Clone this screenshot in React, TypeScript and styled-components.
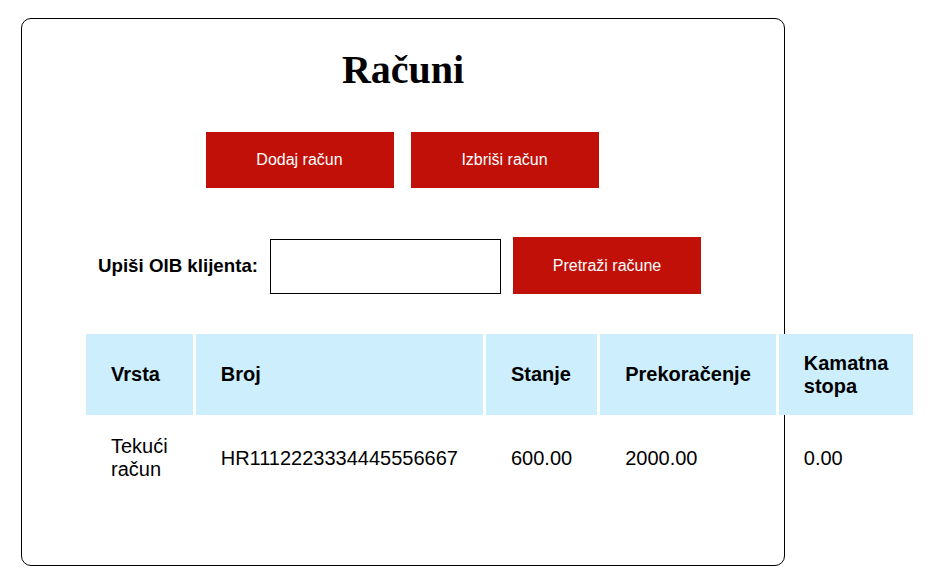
import styled, { createGlobalStyle } from "styled-components";

type RACUN = {
    vrsta: string;
    broj: string;
    stanje: string;
    prekoracenje: string;
    kamata: string;
};

const racuni: RACUN[] = [
    {
        vrsta: "Tekući račun",
        broj: "HR1112223334445556667",
        stanje: "600.00",
        prekoracenje: "2000.00",
        kamata: "0.00",
    },
];

const App = () => {
    return (
        <>
            <GlobalStyle />
            <SCard>
                <STitle>Računi</STitle>
                <SButtonRow>
                    <SButton>Dodaj račun</SButton>
                    <SButton>Izbriši račun</SButton>
                </SButtonRow>
                <SSearchRow>
                    <SLabel htmlFor="oib">Upiši OIB klijenta:</SLabel>
                    <SInput id="oib" type="text" />
                    <SButton $tall>Pretraži račune</SButton>
                </SSearchRow>
                <STable>
                    <thead>
                        <tr>
                            <th>Vrsta</th>
                            <th>Broj</th>
                            <th>Stanje</th>
                            <th>Prekoračenje</th>
                            <th>Kamatna stopa</th>
                        </tr>
                    </thead>
                    <tbody>
                        {racuni.map((r) => (
                            <tr key={r.broj}>
                                <td>{r.vrsta}</td>
                                <td>{r.broj}</td>
                                <td>{r.stanje}</td>
                                <td>{r.prekoracenje}</td>
                                <td>{r.kamata}</td>
                            </tr>
                        ))}
                    </tbody>
                </STable>
            </SCard>
        </>
    );
};

const GlobalStyle = createGlobalStyle`
    body {
        margin: 0;
        background: #fff;
        font-family: "Liberation Sans", Arial, sans-serif;
        color: #000;
    }
`;

const SCard = styled.div`
    box-sizing: border-box;
    width: 764px;
    margin: 18px 0 0 21px;
    padding: 0 63px 68px;
    border: 1px solid #000;
    border-radius: 10px;
    display: flex;
    flex-direction: column;
`;

const STitle = styled.h1`
    font-family: "Liberation Serif", "Times New Roman", serif;
    font-size: 40px;
    font-weight: bold;
    text-align: center;
    margin: 27px 0 39px;
`;

const SButtonRow = styled.div`
    display: flex;
    justify-content: center;
    gap: 17px;
    padding-right: 2px;
`;

const SButton = styled.button<{ $tall?: boolean }>`
    width: 188px;
    height: ${(p) => (p.$tall ? "57px" : "56px")};
    background: #c11007;
    color: #fff;
    border: none;
    font-family: "Liberation Sans", Arial, sans-serif;
    font-size: 16px;
    cursor: pointer;
`;

const SSearchRow = styled.div`
    display: flex;
    justify-content: center;
    align-items: flex-end;
    gap: 12px;
    margin: 49px 0 38px;
    padding-right: 7px;
`;

const SLabel = styled.label`
    font-size: 18.72px;
    font-weight: bold;
    align-self: center;
`;

const SInput = styled.input`
    box-sizing: border-box;
    width: 231px;
    height: 55px;
    border: 1px solid #000;
    padding: 0 8px;
    font-size: 16px;
`;

const STable = styled.table`
    width: 100%;
    border-spacing: 3px 2px;
    font-size: 20px;
    margin-left: -2px;

    th,
    td {
        padding: 16px 25px;
        text-align: left;
        line-height: 23px;
    }

    td {
        padding-top: 18px;
        padding-bottom: 14px;
    }

    th {
        background: #cdeefd;
        font-weight: bold;
        height: 49px;
    }
`;

export default App;
